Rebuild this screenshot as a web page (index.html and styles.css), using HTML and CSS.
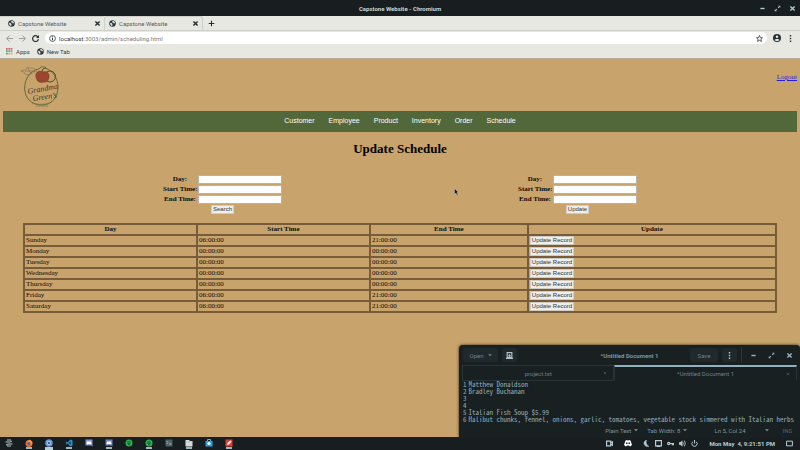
FILE: index.html
```html
<!DOCTYPE html>
<html lang="en">
<head>
<meta charset="utf-8">
<title>Capstone Website</title>
<link rel="stylesheet" href="styles.css">
</head>
<body>
<svg class="defs" aria-hidden="true">
  <symbol id="globe" viewBox="0 0 16 16"><circle cx="8" cy="8" r="7.5" fill="#30383b"/><path d="M2 6l4 1 2 3-1 4-3-2zM8 2l4 1 2 4-3 1-1-2-3-1z" fill="#e7e8e2"/></symbol>
  <symbol id="close" viewBox="0 0 10 10"><path d="M2 2l6 6M8 2l-6 6" stroke="currentColor" stroke-width="2"/></symbol>
  <symbol id="min" viewBox="0 0 10 10"><path d="M2 5h6" stroke="currentColor" stroke-width="2"/></symbol>
  <symbol id="max" viewBox="0 0 10 10"><path d="M6 1h3v3zM1 6v3h3z" fill="currentColor"/><path d="M6 4l2-2M2 8l2-2" stroke="currentColor" stroke-width="1.5"/></symbol>
  <symbol id="dots" viewBox="0 0 10 10"><path d="M4 0h2v2H4zM4 4h2v2H4zM4 8h2v2H4z" fill="currentColor"/></symbol>
  <symbol id="caret" viewBox="0 0 10 10"><path d="M0 3h10L5 8z" fill="currentColor"/></symbol>
</svg>
<div class="screen">
  <header class="titlebar">
    <span class="caption">Capstone Website - Chromium</span>
    <button class="plain" aria-label="Minimize"><svg class="s6"><use href="#min"/></svg></button>
    <button class="plain" aria-label="Restore"><svg class="s6"><use href="#max"/></svg></button>
    <button class="plain" aria-label="Close"><svg class="s6"><use href="#close"/></svg></button>
  </header>
  <div class="tabs">
    <div class="tab"><svg class="s6"><use href="#globe"/></svg><span>Capstone Website</span><button class="plain" aria-label="Close tab"><svg class="s6"><use href="#close"/></svg></button></div>
    <div class="tab active"><svg class="s6"><use href="#globe"/></svg><span>Capstone Website</span><button class="plain" aria-label="Close tab"><svg class="s6"><use href="#close"/></svg></button></div>
    <button class="plain newtab" aria-label="New tab"><svg class="s6" viewBox="0 0 10 10"><path d="M5 1v8M1 5h8" stroke="currentColor" stroke-width="1.500"/></svg></button>
  </div>
  <div class="toolbar">
    <button class="plain faded" aria-label="Back"><svg class="s6" viewBox="0 0 12 12"><path d="M12 6H2M6 1L1 6l5 5" fill="none" stroke="currentColor" stroke-width="1.5"/></svg></button>
    <button class="plain faded" aria-label="Forward"><svg class="s6" viewBox="0 0 12 12"><path d="M0 6h10M6 1l5 5-5 5" fill="none" stroke="currentColor" stroke-width="1.5"/></svg></button>
    <button class="plain" aria-label="Reload"><svg class="s6" viewBox="0 0 12 12"><path d="M10 3a5 5 0 1 0 1 4" fill="none" stroke="currentColor" stroke-width="2"/><path d="M12 0v5H7z" fill="currentColor"/></svg></button>
    <div class="address">
      <svg class="s6" viewBox="0 0 12 12"><circle cx="6" cy="6" r="5" fill="none" stroke="currentColor" stroke-width="1.3"/><path d="M6 5v4M6 2.5V4" stroke="currentColor" stroke-width="1.5"/></svg>
      <span class="url"><b>localhost</b>:3003/admin/scheduling.html</span>
      <svg class="s6" viewBox="0 0 12 12"><path d="M6 1l1.5 3.5 3.7.3-2.8 2.5.9 3.7L6 9l-3.3 2 .9-3.7L.8 4.8l3.7-.3z" fill="none" stroke="currentColor" stroke-width="1.3"/></svg>
    </div>
    <button class="plain" aria-label="Profile"><svg class="s8" viewBox="0 0 16 16"><circle cx="8" cy="8" r="8" fill="#263032"/><circle cx="8" cy="5.500" r="2.500" fill="#e7e8e2"/><path d="M3 12c1-3 9-3 10 0-2 2.500-8 2.500-10 0z" fill="#e7e8e2"/></svg></button>
    <button class="plain" aria-label="Menu"><svg class="s6"><use href="#dots"/></svg></button>
  </div>
  <nav class="bookmarks">
    <svg class="s6" viewBox="0 0 12 12"><path d="M0 0h3v3H0zM4 0h3v3H4zM8 0h3v3H8z" fill="#d96a55"/><path d="M0 4h3v3H0zM0 8h3v3H0z" fill="#56a675"/><path d="M4 4h3v3H4zM8 4h3v3H8z" fill="#669bd5"/><path d="M4 8h3v3H4zM8 8h3v3H8z" fill="#dfad49"/></svg><span>Apps</span>
    <svg class="s6 gap"><use href="#globe"/></svg><span>New Tab</span>
  </nav>
  <main class="page">
    <div class="masthead">
      <svg class="logo" viewBox="0 0 42 42" role="img" aria-label="Grandma Green's">
        <path d="M19 4C9 5 3 17 5 27c2 9 9 13 17 13 9 0 16-7 16-18C38 12 31 5 27 4c-3-3-6-3-8 0z" fill="none" stroke="#58703f"/>
        <path d="M17 6C12 1 8 4 7 2c1 3-3 3-6 4 4 0 3 4 7 4 3 0 4-3 9-4zM5 6l10 0M8 3l3 6" fill="none" stroke="#8b7650" stroke-width=".7"/>
        <circle cx="30" cy="11.500" r="5.500" fill="none" stroke="#4d4536"/>
        <path d="M23 7c-5-2-8 1-7 5 1 5 4 6 7 5 5 1 6-3 6-6 0-4-3-5-6-4z" fill="#9c442f" stroke="#713c2c" stroke-width=".6"/>
        <path d="M22 7c0-3 2-4 4-4" fill="none" stroke="#4d4536"/>
        <text class="script" x="8" y="29" transform="rotate(-10 8 29)">Grandma</text>
        <text class="script" x="13" y="36" transform="rotate(-8 13 36)">Green’s</text>
        <path d="M12 38q10 3 20-1M16 41h12" fill="none" stroke="#80704e" stroke-dasharray="1 .6"/>
      </svg>
      <a class="logout" href="#">Logout</a>
    </div>
    <nav class="menu"><a href="#">Customer</a><a href="#">Employee</a><a href="#">Product</a><a href="#">Inventory</a><a href="#">Order</a><a href="#">Schedule</a></nav>
    <h1>Update Schedule</h1>
    <div class="forms">
      <form>
        <label for="d1">Day:</label><input id="d1" type="text">
        <label for="s1">Start Time:</label><input id="s1" type="text">
        <label for="e1">End Time:</label><input id="e1" type="text">
        <button class="btn" type="button">Search</button>
      </form>
      <form>
        <label for="d2">Day:</label><input id="d2" type="text">
        <label for="s2">Start Time:</label><input id="s2" type="text">
        <label for="e2">End Time:</label><input id="e2" type="text">
        <button class="btn" type="button">Update</button>
      </form>
    </div>
    <table class="schedule">
      <colgroup><col class="c23"><col class="c23"><col class="c21"><col></colgroup>
      <thead><tr><th>Day</th><th>Start Time</th><th>End Time</th><th>Update</th></tr></thead>
      <tbody>
        <tr><td>Sunday</td><td>06:00:00</td><td>21:00:00</td><td><button class="btn">Update Record</button></td></tr>
        <tr><td>Monday</td><td>00:00:00</td><td>00:00:00</td><td><button class="btn">Update Record</button></td></tr>
        <tr><td>Tuesday</td><td>00:00:00</td><td>00:00:00</td><td><button class="btn">Update Record</button></td></tr>
        <tr><td>Wednesday</td><td>00:00:00</td><td>00:00:00</td><td><button class="btn">Update Record</button></td></tr>
        <tr><td>Thursday</td><td>00:00:00</td><td>00:00:00</td><td><button class="btn">Update Record</button></td></tr>
        <tr><td>Friday</td><td>06:00:00</td><td>21:00:00</td><td><button class="btn">Update Record</button></td></tr>
        <tr><td>Saturday</td><td>06:00:00</td><td>21:00:00</td><td><button class="btn">Update Record</button></td></tr>
      </tbody>
    </table>
  </main>
  <footer class="taskbar">
    <div class="apps">
      <svg class="s8" viewBox="0 0 16 16"><path d="M4 2h8M1 6h9l4-2M2 12l4-2h9M4 14h8" stroke="#b5cdd5" stroke-width="2" fill="none"/></svg>
      <svg class="s8 run" viewBox="0 0 16 16"><circle cx="8" cy="9" r="7" fill="#ee692b"/><path d="M1 2l4 3 5-4 5 6-2 5z" fill="#f99b35"/><circle cx="8" cy="9" r="3" fill="#5662ae"/></svg>
      <svg class="s8 run current" viewBox="0 0 16 16"><circle cx="8" cy="8" r="7.500" fill="#6597d3"/><circle cx="8" cy="8" r="3.500" fill="#3d69b0" stroke="#c7dcef" stroke-width="1.500"/></svg>
      <svg class="s8 run" viewBox="0 0 16 16"><path d="M11 1l4 2v10l-4 2-6-6-3 2-1-1 2-2-2-2 1-1 3 2zM11 5L7 8l4 3z" fill="#2b91ce" fill-rule="evenodd"/></svg>
      <svg class="s8" viewBox="0 0 16 16"><path d="M1 1h14v14l-3-2H1z" fill="#8993d1"/><path d="M4 5h8l1 5-3 1-1-1H7l-1 1-3-1z" fill="#fff"/></svg>
      <svg class="s8 run" viewBox="0 0 16 16"><path d="M1 1h14v14l-3-2H1z" fill="#6e83bd"/><path d="M4 5h8l1 5-3 1-1-1H7l-1 1-3-1z" fill="#fff"/></svg>
      <svg class="s8" viewBox="0 0 16 16"><circle cx="8" cy="8" r="7" fill="#25b74c"/><path d="M4 6q5-2 8 1M5 9q4-1 6 1M6 11q3 0 4 1" fill="none" stroke="#172526" stroke-width="1.300"/></svg>
      <svg class="s8 run" viewBox="0 0 16 16"><circle cx="8" cy="8" r="7" fill="#25b74c"/><path d="M4 6q5-2 8 1M5 9q4-1 6 1M6 11q3 0 4 1" fill="none" stroke="#172526" stroke-width="1.300"/></svg>
      <svg class="s8" viewBox="0 0 16 16"><path d="M1 1h14v14H1z" fill="#4b6067"/><path d="M3 4l3 3-3 3M8 10h5" fill="none" stroke="#c4d0d4" stroke-width="1.500"/></svg>
      <svg class="s8 run" viewBox="0 0 16 16"><path d="M1 2h7l2 2h5v11H1z" fill="#d5dddd"/><path d="M1 6h14" stroke="#9aa6a7"/></svg>
      <svg class="s8" viewBox="0 0 16 16"><path d="M1 4h14v11H1z" fill="#21a2eb"/><path d="M5 4V1h6v3" fill="none" stroke="#55bbee" stroke-width="2"/><circle cx="8" cy="9" r="3" fill="#fff"/></svg>
      <svg class="s8 run" viewBox="0 0 16 16"><path d="M1 1h14v14H1z" fill="#e53d31"/><path d="M4 12l1-4 6-5 2 2-5 6z" fill="#fff"/></svg>
    </div>
    <div class="tray">
      <svg class="s6 wide" viewBox="0 0 12 12"><path d="M1 2h7v8H1zM8 5l3-2v6L8 7" fill="none" stroke="currentColor" stroke-width="2"/></svg>
      <svg class="s8 wide" viewBox="0 0 16 16"><path d="M3 3l3-1 1 1h2l1-1 3 1 3 9-4 3-2-2H6l-2 2-4-3z" fill="#fff"/><path d="M4 7h3v3H4zM9 7h3v3H9z" fill="#182021"/></svg>
      <svg class="s6" viewBox="0 0 12 12"><path d="M6 0C-1 3 1 12 10 11 6 9 4 4 6 0z" fill="currentColor" stroke="currentColor"/></svg>
      <svg class="s6" viewBox="0 0 12 12"><path d="M1 1h10v9H1z" fill="none" stroke="currentColor" stroke-width="2"/><path d="M3 11h6" stroke="currentColor" stroke-width="2"/></svg>
      <svg class="s6" viewBox="0 0 12 12"><circle cx="3" cy="6" r="2" fill="none" stroke="currentColor" stroke-width="2"/><path d="M5 6h7M9 6v3M11 6v3" stroke="currentColor" stroke-width="2"/></svg>
      <svg class="s6" viewBox="0 0 12 12"><path d="M0 4h2l4-3v10L2 8H0z" fill="currentColor"/><path d="M7 4q2 2 0 4M9 1q4 5 0 10" fill="none" stroke="currentColor" stroke-width="1.500"/></svg>
      <svg class="s6" viewBox="0 0 12 12"><path d="M3 3a4.500 4.500 0 1 0 6 0M6 0v6" fill="none" stroke="currentColor" stroke-width="1.700"/></svg>
      <time>Mon May&nbsp; 4, 9:21:51 PM</time>
      <svg class="s6" viewBox="0 0 12 12"><path d="M1 2h10v8H1z" fill="none" stroke="currentColor" stroke-width="1.700"/></svg>
    </div>
  </footer>
  <section class="editor">
    <div class="ed-head">
      <button class="chip open">Open <svg class="s4"><use href="#caret"/></svg></button>
      <button class="chip" aria-label="New document"><svg class="s6" viewBox="0 0 12 12"><path d="M2 1h8v8H2zM0 11h12M6 4v5M4 6h4" fill="none" stroke="#a9c1ca" stroke-width="2"/></svg></button>
      <span class="ed-title">*Untitled Document 1</span>
      <button class="chip save">Save</button>
      <button class="chip" aria-label="Menu"><svg class="s6 light"><use href="#dots"/></svg></button>
      <div class="ed-win">
        <button class="plain" aria-label="Minimize"><svg class="s6"><use href="#min"/></svg></button>
        <button class="plain" aria-label="Restore"><svg class="s6"><use href="#max"/></svg></button>
        <button class="plain" aria-label="Close"><svg class="s6"><use href="#close"/></svg></button>
      </div>
    </div>
    <div class="ed-tabs">
      <div class="ed-tab"><span>project.txt</span><svg class="s4"><use href="#close"/></svg></div>
      <div class="ed-tab on"><span>*Untitled Document 1</span><svg class="s4"><use href="#close"/></svg></div>
    </div>
    <ol class="code">
      <li>Matthew Donaldson</li><li>Bradley Buchanan</li><li></li><li></li><li>Italian Fish Soup $5.99</li><li>Halibut chunks, fennel, onions, garlic, tomatoes, vegetable stock simmered with Italian herbs</li>
    </ol>
    <div class="status"><span>Plain Text <svg class="s4"><use href="#caret"/></svg></span><span>Tab Width: 8 <svg class="s4"><use href="#caret"/></svg></span><span class="pos">Ln 5, Col 24</span><svg class="s4"><use href="#caret"/></svg><span class="ins">INS</span></div>
  </section>
  <svg class="pointer" viewBox="0 0 10 16" aria-hidden="true"><path d="M1 1v12l3-3 2 5 2-1-2-5h3z" fill="#111" stroke="#ddd" stroke-width=".8"/></svg>
</div>
</body>
</html>
```
FILE: styles.css
```css
* { box-sizing: border-box; }
body { margin: 0; background: #c8a36c; }
button, input { font: inherit; margin: 0; }
.defs { position: absolute; width: 0; height: 0; }
.screen { position: relative; min-height: 100vh; display: flex; flex-direction: column; font-family: Roboto, sans-serif; font-size: 6px; overflow: hidden; }
svg { flex: none; display: block; }
.s4 { width: 4px; height: 4px; }
.s6 { width: 7px; height: 7px; }
.s8 { width: 8px; height: 8px; }
.plain { border: 0; padding: 0; background: none; color: inherit; }

.titlebar { height: 16px; background: #181e20; color: #adc9d4; display: grid; grid-template-columns: 1fr repeat(3, 7px); align-items: center; gap: 8px; padding-right: 4px; }
.caption { text-align: center; font-weight: 700; color: #c4d5da; padding-left: 49px; }
.tabs { height: 15px; background: #e7e8e2; display: flex; border-bottom: 1px solid #cfd0ca; color: #222b2e; }
.tab { width: 99px; display: flex; align-items: center; gap: 3px; padding: 0 3px 0 8px; color: #555c5f; border-top: 1px solid #cfd0ca; }
.tab:first-child { width: 104px; }
.tab.active { border: 1px solid #cfd0ca; border-bottom: 0; border-radius: 3px 3px 0 0; padding-left: 4px; background: #e7e8e2; }
.tab span { flex: 1; }
.tab button { color: #222b2e; }
.newtab { padding-left: 5px; }
.toolbar { height: 14px; background: #e7e8e2; display: flex; align-items: center; gap: 6px; padding: 0 6px; color: #263032; }
.faded { color: #8a9092; }
.address { flex: 1; height: 12px; border-radius: 6px; background: #fff; display: flex; align-items: center; gap: 3px; padding: 0 4px; }
.url { flex: 1; color: #777c7e; }
.url b { color: #33393c; font-weight: 400; }
.bookmarks { height: 14px; background: #e7e8e2; border-bottom: 1px solid #b7ad99; display: flex; align-items: center; gap: 3px; padding-left: 6px; color: #363f42; }
.bookmarks .gap { margin-left: 4px; }

.page { flex: 1; background: #c8a36c; padding: 6px 3px 0; font-family: "Liberation Serif", serif; font-size: 7px; color: #0d0a06; }
.masthead { display: flex; justify-content: space-between; padding-left: 17px; height: 46px; }
.logo { width: 42px; height: 42px; }
.script { font: italic 8px "Liberation Serif", serif; fill: #39382c; }
.logout { margin-top: 8px; color: #2a1be0; }
.menu { height: 21px; background: #52683a; display: flex; justify-content: center; align-items: center; gap: 14px; font-family: "Liberation Sans", sans-serif; padding-bottom: 2px; }
.menu a { color: #fff; text-decoration: none; }
h1 { margin: 9px 0 18px; text-align: center; font-size: 13px; line-height: 16px; color: #000; }
.forms { display: grid; grid-template-columns: 1fr 1fr; padding: 0 42px; }
form { display: grid; grid-template-columns: 34px 84px; justify-content: center; gap: 1px; text-align: center; font-weight: 700; line-height: 9px; white-space: nowrap; }
form input { height: 9px; width: 100%; border: 1px solid #b9b3a8; background: #fff; padding: 0; }
form .btn { grid-column: 1 / 3; justify-self: center; }
.btn { border: 1px solid #cfccc4; background: #eeeeec; color: #2e3436; font: 6px/7px "Liberation Sans", sans-serif; padding: 0 1px; height: 9px; display: block; }
.schedule { table-layout: fixed; width: calc(100% - 40px); margin: 9px auto 0; border: 1px solid #785c39; border-spacing: 0; }
.schedule th, .schedule td { border: 1px solid #785c39; padding: 0 1px; line-height: 9px; text-align: left; }
.schedule th { text-align: center; }
.c23 { width: 23%; }
.c21 { width: 21%; }

.taskbar { height: 13px; background: #181e20; color: #b5cdd5; display: flex; justify-content: space-between; align-items: center; padding: 0 7px 1px 5px; }
.apps { display: flex; gap: 12px; }
.run { box-shadow: 0 3px 0 -1px #9fb7c0; }
.current { box-shadow: 0 3px 0 #b5cdd5; }
.tray { display: flex; align-items: center; gap: 5px; font-weight: 700; }
.tray .wide { margin-right: 6px; }
.tray time { margin: 0 6px; }

.editor { position: absolute; right: 0; bottom: 13px; width: 341px; background: #192022; color: #7d959e; border-radius: 4px 4px 0 0; box-shadow: 0 0 3px #2b2115; }
.ed-head { height: 20px; display: flex; align-items: center; gap: 4px; padding: 0 7px 0 4px; }
.chip { border: 0; border-radius: 3px; background: #20292c; color: #6c828a; height: 14px; min-width: 15px; padding: 0 4px; display: flex; align-items: center; justify-content: center; gap: 4px; }
.open { width: 35px; }
.save { width: 28px; }
.light { color: #b5cdd5; }
.ed-title { flex: 1; text-align: center; font-weight: 700; padding-left: 52px; }
.ed-win { display: flex; gap: 11px; padding-left: 8px; border-left: 1px solid #2b3538; color: #9db4bd; height: 16px; }
.ed-tabs { display: grid; grid-template-columns: 5fr 6fr; padding: 0 3px; }
.ed-tab { height: 16px; display: flex; align-items: center; padding: 0 6px 0 10px; border: 1px solid #293235; color: #6c828a; }
.ed-tab span { flex: 1; text-align: center; }
.ed-tab svg { color: #475459; }
.ed-tab.on { border-top: 2px solid #91b1bf; border-bottom-color: #192022; }
.code { margin: 0; padding: 0 0 0 4px; list-style: none; counter-reset: n; font: 7px/7px "Noto Sans Mono CJK SC", monospace; color: #92acb6; white-space: nowrap; }
.code li { counter-increment: n; height: 7px; display: flex; gap: 2px; }
.code li::before { content: counter(n); }
.status { height: 14px; display: flex; justify-content: flex-end; align-items: center; gap: 9px; padding-right: 8px; }
.status span { display: flex; align-items: center; gap: 3px; }
.status .pos { margin: 0 10px 0 18px; }
.status .ins { color: #56666d; margin-left: 5px; }
.pointer { position: absolute; left: 454px; top: 188px; width: 5px; height: 8px; }
```
